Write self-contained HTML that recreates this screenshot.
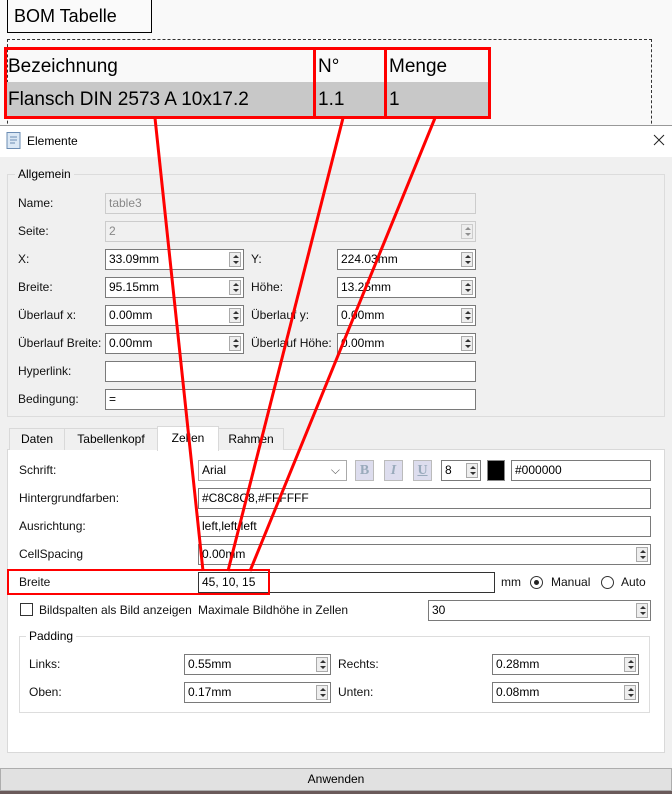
<!DOCTYPE html>
<html><head><meta charset="utf-8"><style>
*{box-sizing:border-box;margin:0;padding:0}
body{width:672px;height:794px;overflow:hidden;background:#f0f0f0;font-family:"Liberation Sans",sans-serif;font-size:12px;color:#000;position:relative}
.a{position:absolute}
.lbl{position:absolute;font-size:12px;line-height:20px;color:#111}
.in{position:absolute;height:21px;border:1px solid #7a7a7a;background:#fff;font-size:12px;line-height:19px;padding-left:3px;white-space:nowrap;overflow:hidden}
.dis{border-color:#ccc;background:#f0f0f0;color:#888}
.sp{position:absolute;right:2px;top:2px;width:12px;height:15px;border:1px solid #aaa;background:#eee}
.sp:before{content:"";position:absolute;left:3px;top:2px;border:3px solid transparent;border-bottom:3px solid #333;border-top:0}
.sp:after{content:"";position:absolute;left:3px;bottom:2px;border:3px solid transparent;border-top:3px solid #333;border-bottom:0}
.tab{position:absolute;top:428px;height:22px;border:1px solid #d9d9d9;border-bottom:none;background:#f0f0f0;text-align:center;line-height:20px;font-size:12px}
</style></head><body>
<div class="a" style="left:0;top:0;width:672px;height:125px;background:#f9f9f9"></div>
<div class="a" style="left:7px;top:-1px;width:145px;height:34px;border:1px solid #000;background:#fafafa;font-size:18px;line-height:33px;padding-left:6px">BOM Tabelle</div>
<div class="a" style="left:7px;top:39px;width:645px;height:100px;border:1px dashed #333;border-bottom:none"></div>
<div class="a" style="left:5px;top:82px;width:484px;height:34px;background:#c8c8c8"></div>
<div class="a" style="left:8px;top:56px;font-size:19px">Bezeichnung</div>
<div class="a" style="left:318px;top:56px;font-size:19px">N°</div>
<div class="a" style="left:389px;top:56px;font-size:19px">Menge</div>
<div class="a" style="left:8px;top:89px;font-size:19px">Flansch DIN 2573 A 10x17.2</div>
<div class="a" style="left:318px;top:89px;font-size:19px">1.1</div>
<div class="a" style="left:389px;top:89px;font-size:19px">1</div>
<div class="a" style="left:4px;top:47px;width:487px;height:72px;border:3px solid #f00"></div>
<div class="a" style="left:313px;top:47px;width:3px;height:72px;background:#f00"></div>
<div class="a" style="left:384px;top:47px;width:3px;height:72px;background:#f00"></div>
<!-- dialog -->
<div class="a" style="left:0;top:125px;width:672px;height:32px;background:#fff;border-top:1px solid #999"></div>
<svg class="a" style="left:6px;top:132px" width="16" height="17"><rect x="1" y="0.5" width="13" height="16" fill="#dbe8f5" stroke="#6b8cb3"/><path d="M4 5h7M4 8h7M4 11h5" stroke="#6b8cb3"/></svg>
<div class="a" style="left:27px;top:134px;font-size:12px">Elemente</div>
<svg class="a" style="left:653px;top:134px" width="12" height="12"><path d="M1 1L11 11M11 1L1 11" stroke="#222" stroke-width="1"/></svg>
<div class="a" style="left:7px;top:174px;width:658px;height:243px;border:1px solid #dcdcdc"></div>
<div class="a" style="left:15px;top:166px;background:#f0f0f0;padding:0 3px;line-height:16px">Allgemein</div>
<div class="lbl" style="left:18px;top:193px">Name:</div><div class="in dis" style="left:105px;top:193px;width:371px">table3</div>
<div class="lbl" style="left:18px;top:221px">Seite:</div><div class="in dis" style="left:105px;top:221px;width:371px">2<div class="sp" style="opacity:.5"></div></div>
<div class="lbl" style="left:18px;top:249px">X:</div><div class="in" style="left:105px;top:249px;width:139px">33.09mm<div class="sp"></div></div>
<div class="lbl" style="left:251px;top:249px">Y:</div><div class="in" style="left:337px;top:249px;width:139px">224.03mm<div class="sp"></div></div>
<div class="lbl" style="left:18px;top:277px">Breite:</div><div class="in" style="left:105px;top:277px;width:139px">95.15mm<div class="sp"></div></div>
<div class="lbl" style="left:251px;top:277px">Höhe:</div><div class="in" style="left:337px;top:277px;width:139px">13.25mm<div class="sp"></div></div>
<div class="lbl" style="left:18px;top:305px">Überlauf x:</div><div class="in" style="left:105px;top:305px;width:139px">0.00mm<div class="sp"></div></div>
<div class="lbl" style="left:251px;top:305px">Überlauf y:</div><div class="in" style="left:337px;top:305px;width:139px">0.00mm<div class="sp"></div></div>
<div class="lbl" style="left:18px;top:333px">Überlauf Breite:</div><div class="in" style="left:105px;top:333px;width:139px">0.00mm<div class="sp"></div></div>
<div class="lbl" style="left:251px;top:333px">Überlauf Höhe:</div><div class="in" style="left:337px;top:333px;width:139px">0.00mm<div class="sp"></div></div>
<div class="lbl" style="left:18px;top:361px">Hyperlink:</div><div class="in" style="left:105px;top:361px;width:371px"></div>
<div class="lbl" style="left:18px;top:389px">Bedingung:</div><div class="in" style="left:105px;top:389px;width:371px">=</div>
<!-- tabs -->
<div class="a" style="left:7px;top:449px;width:658px;height:304px;background:#fff;border:1px solid #d9d9d9"></div>
<div class="tab" style="left:9px;width:56px">Daten</div>
<div class="tab" style="left:64px;width:94px">Tabellenkopf</div>
<div class="tab" style="left:218px;width:66px">Rahmen</div>
<div class="tab" style="left:157px;top:426px;height:25px;width:62px;background:#fff;line-height:23px">Zellen</div>
<div class="lbl" style="left:19px;top:460px">Schrift:</div>
<div class="in" style="left:198px;top:460px;width:149px;border-color:#aaa">Arial<span style="position:absolute;right:6px;top:0;color:#555">⌵</span></div>
<div class="a" style="left:355px;top:460px;width:19px;height:21px;background:#dde;border:1px solid #bbb;color:#9ab;font:bold 14px 'Liberation Serif';text-align:center;line-height:19px">B</div>
<div class="a" style="left:384px;top:460px;width:19px;height:21px;background:#dde;border:1px solid #bbb;color:#9ab;font:italic bold 14px 'Liberation Serif';text-align:center;line-height:19px">I</div>
<div class="a" style="left:413px;top:460px;width:19px;height:21px;background:#dde;border:1px solid #bbb;color:#9ab;font:bold 14px 'Liberation Serif';text-align:center;line-height:19px;text-decoration:underline">U</div>
<div class="in" style="left:441px;top:460px;width:40px">8<div class="sp"></div></div>
<div class="a" style="left:487px;top:460px;width:18px;height:21px;background:#000;border:1px solid #888"></div>
<div class="in" style="left:511px;top:460px;width:140px">#000000</div>
<div class="lbl" style="left:19px;top:488px">Hintergrundfarben:</div><div class="in" style="left:198px;top:488px;width:453px">#C8C8C8,#FFFFFF</div>
<div class="lbl" style="left:19px;top:516px">Ausrichtung:</div><div class="in" style="left:198px;top:516px;width:453px">left,left,left</div>
<div class="lbl" style="left:19px;top:544px">CellSpacing</div><div class="in" style="left:198px;top:544px;width:453px">0.00mm<div class="sp"></div></div>
<div class="lbl" style="left:19px;top:572px">Breite</div><div class="in" style="left:198px;top:572px;width:297px;border-color:#333">45, 10, 15</div>
<div class="lbl" style="left:501px;top:572px">mm</div>
<div class="a" style="left:530px;top:576px;width:13px;height:13px;border:1px solid #333;border-radius:50%"><div style="margin:3px;width:5px;height:5px;border-radius:50%;background:#222"></div></div>
<div class="lbl" style="left:551px;top:572px">Manual</div>
<div class="a" style="left:601px;top:576px;width:13px;height:13px;border:1px solid #333;border-radius:50%"></div>
<div class="lbl" style="left:621px;top:572px">Auto</div>
<div class="a" style="left:7px;top:569px;width:263px;height:26px;border:2px solid #f00"></div>
<div class="a" style="left:20px;top:603px;width:13px;height:13px;border:1px solid #333;background:#fff"></div>
<div class="lbl" style="left:39px;top:600px">Bildspalten als Bild anzeigen</div>
<div class="lbl" style="left:198px;top:600px">Maximale Bildhöhe in Zellen</div>
<div class="in" style="left:428px;top:600px;width:223px">30<div class="sp"></div></div>
<div class="a" style="left:19px;top:636px;width:631px;height:77px;border:1px solid #ddd"></div>
<div class="a" style="left:26px;top:628px;background:#fff;padding:0 3px;line-height:16px">Padding</div>
<div class="lbl" style="left:29px;top:654px">Links:</div><div class="in" style="left:184px;top:654px;width:147px">0.55mm<div class="sp"></div></div>
<div class="lbl" style="left:338px;top:654px">Rechts:</div><div class="in" style="left:492px;top:654px;width:147px">0.28mm<div class="sp"></div></div>
<div class="lbl" style="left:29px;top:682px">Oben:</div><div class="in" style="left:184px;top:682px;width:147px">0.17mm<div class="sp"></div></div>
<div class="lbl" style="left:338px;top:682px">Unten:</div><div class="in" style="left:492px;top:682px;width:147px">0.08mm<div class="sp"></div></div>
<div class="a" style="left:0;top:768px;width:672px;height:23px;background:#e1e1e1;border:1px solid #adadad;text-align:center;line-height:21px">Anwenden</div>
<div class="a" style="left:0;top:791px;width:672px;height:3px;background:#6a5a5a"></div>
<svg class="a" style="left:0;top:0" width="672" height="794"><g stroke="#f00" stroke-width="3"><line x1="155" y1="118" x2="203" y2="571"/><line x1="343" y1="118" x2="228" y2="571"/><line x1="435" y1="118" x2="250" y2="571"/></g></svg>
</body></html>
